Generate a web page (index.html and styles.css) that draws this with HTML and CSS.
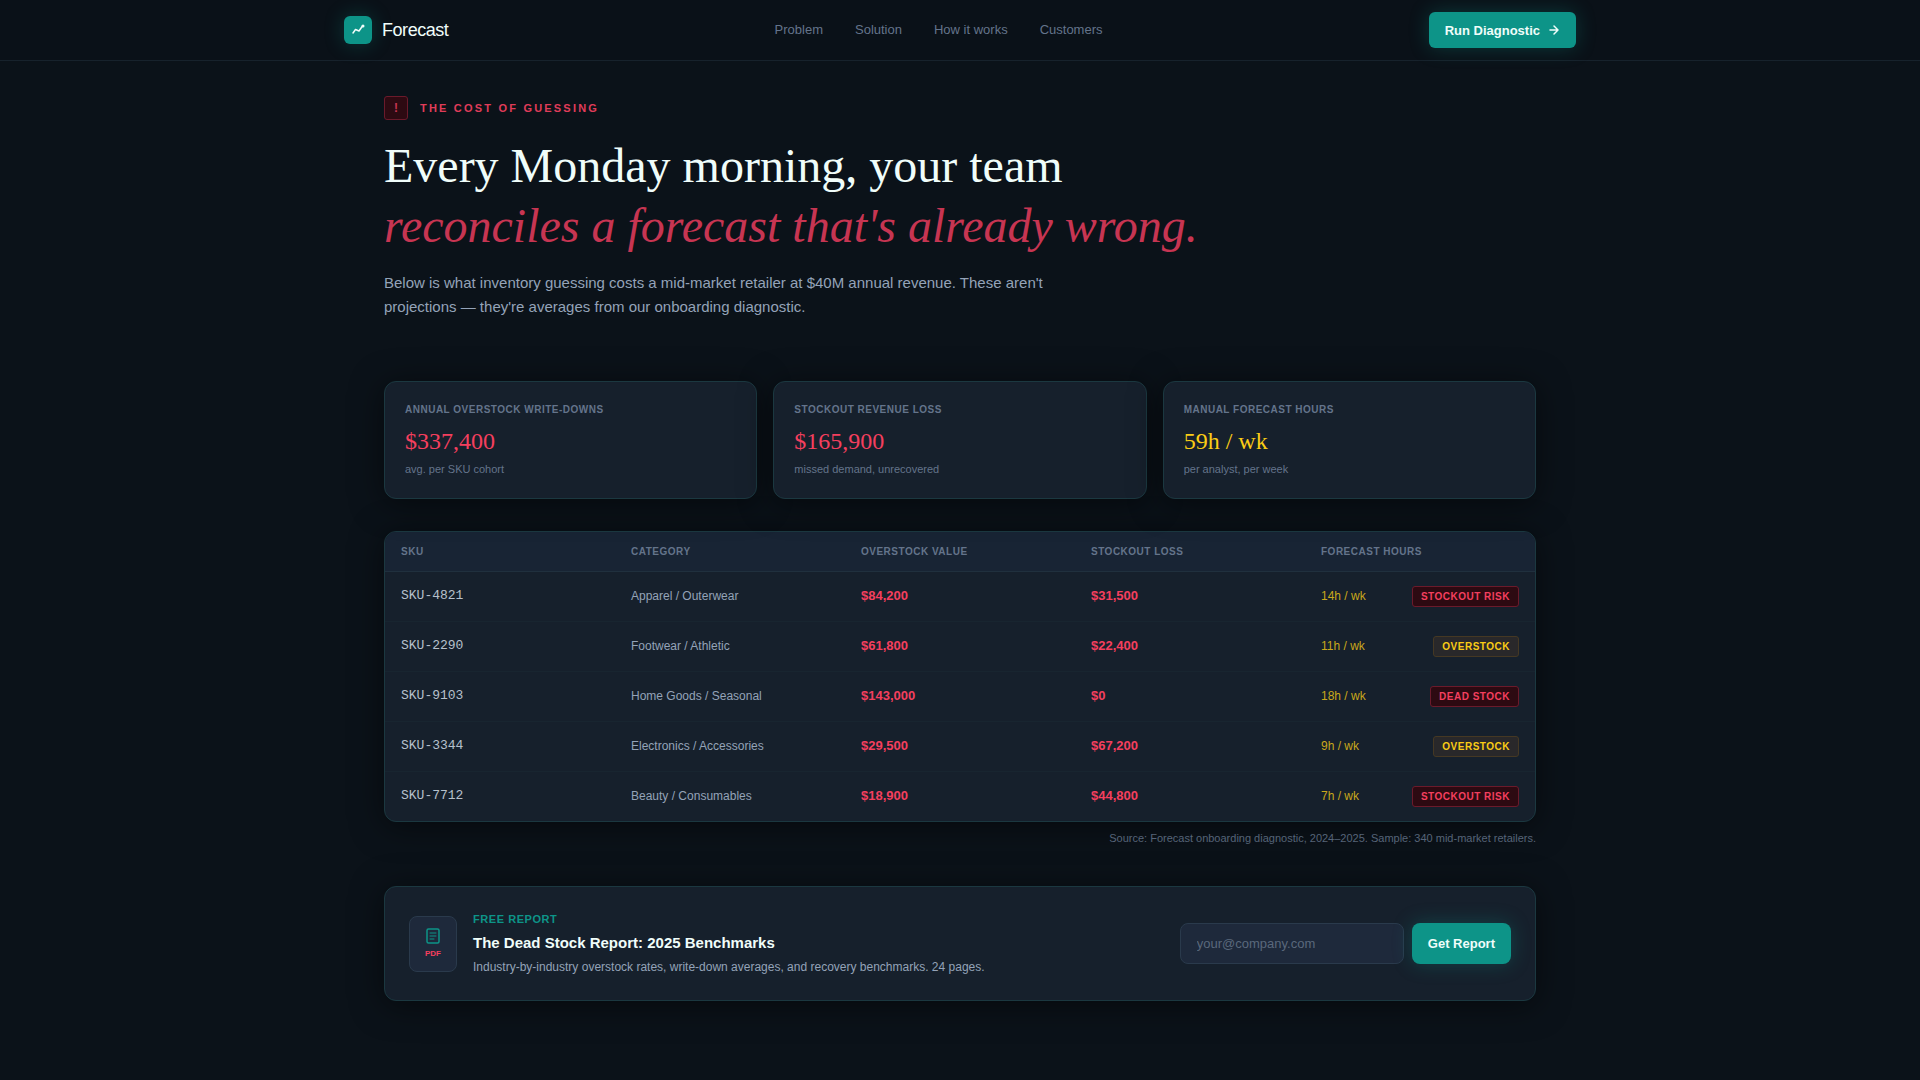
FILE: index.html
```html
<!DOCTYPE html>
<html lang="en">
<head>
  <meta charset="UTF-8">
  <meta name="viewport" content="width=device-width, initial-scale=1.0">
  <title>Forecast</title>
  <link rel="stylesheet" href="styles.css">
</head>
<body>

<!-- Top Navigation -->
<header class="site-header">
  <div class="header-inner">
    <a class="brand" href="#">
      <span class="brand-mark">
        <svg width="14" height="14" viewBox="0 0 14 14" fill="none" stroke="currentColor" stroke-width="1.5" stroke-linecap="round" stroke-linejoin="round" aria-hidden="true">
          <path d="M2 10l2.5-3.5L8 8l3.5-5"/>
          <circle cx="12" cy="3" r="1.5" fill="currentColor" stroke="none"/>
        </svg>
      </span>
      <span class="brand-name">Forecast</span>
    </a>
    <nav class="main-nav">
      <a href="#problem">Problem</a>
      <a href="#solution">Solution</a>
      <a href="#how-it-works">How it works</a>
      <a href="#customers">Customers</a>
    </nav>
    <button type="button" class="btn-primary btn-nav">
      Run Diagnostic
      <svg width="12" height="12" viewBox="0 0 12 12" fill="none" stroke="currentColor" stroke-width="1.5" stroke-linecap="round" stroke-linejoin="round" aria-hidden="true">
        <path d="M2 6h8M6 2l4 4-4 4"/>
      </svg>
    </button>
  </div>
</header>

<main class="container" id="problem">
  <!-- Intro -->
  <div class="eyebrow">
    <span class="eyebrow-icon">!</span>
    <span class="eyebrow-text">The cost of guessing</span>
  </div>
  <h1>Every Monday morning, your team <em>reconciles a forecast that's already wrong.</em></h1>
  <p class="lead">Below is what inventory guessing costs a mid-market retailer at $40M annual revenue. These aren't projections — they're averages from our onboarding diagnostic.</p>

  <!-- Summary Cards -->
  <div class="stats">
    <div class="card stat">
      <h2>Annual overstock write-downs</h2>
      <p class="stat-value loss">$337,400</p>
      <p class="stat-note">avg. per SKU cohort</p>
    </div>
    <div class="card stat">
      <h2>Stockout revenue loss</h2>
      <p class="stat-value loss">$165,900</p>
      <p class="stat-note">missed demand, unrecovered</p>
    </div>
    <div class="card stat">
      <h2>Manual forecast hours</h2>
      <p class="stat-value hours">59h / wk</p>
      <p class="stat-note">per analyst, per week</p>
    </div>
  </div>

  <!-- SKU Table -->
  <div class="card table-card">
    <table>
      <thead>
        <tr>
          <th>SKU</th>
          <th>Category</th>
          <th>Overstock value</th>
          <th>Stockout loss</th>
          <th>Forecast hours</th>
        </tr>
      </thead>
      <tbody>
        <tr>
          <td class="sku">SKU-4821</td>
          <td>Apparel / Outerwear</td>
          <td class="money">$84,200</td>
          <td class="money">$31,500</td>
          <td><div class="hours-cell">14h / wk <span class="badge badge-risk">Stockout risk</span></div></td>
        </tr>
        <tr>
          <td class="sku">SKU-2290</td>
          <td>Footwear / Athletic</td>
          <td class="money">$61,800</td>
          <td class="money">$22,400</td>
          <td><div class="hours-cell">11h / wk <span class="badge badge-over">Overstock</span></div></td>
        </tr>
        <tr>
          <td class="sku">SKU-9103</td>
          <td>Home Goods / Seasonal</td>
          <td class="money">$143,000</td>
          <td class="money">$0</td>
          <td><div class="hours-cell">18h / wk <span class="badge badge-risk">Dead stock</span></div></td>
        </tr>
        <tr>
          <td class="sku">SKU-3344</td>
          <td>Electronics / Accessories</td>
          <td class="money">$29,500</td>
          <td class="money">$67,200</td>
          <td><div class="hours-cell">9h / wk <span class="badge badge-over">Overstock</span></div></td>
        </tr>
        <tr>
          <td class="sku">SKU-7712</td>
          <td>Beauty / Consumables</td>
          <td class="money">$18,900</td>
          <td class="money">$44,800</td>
          <td><div class="hours-cell">7h / wk <span class="badge badge-risk">Stockout risk</span></div></td>
        </tr>
      </tbody>
    </table>
  </div>
  <p class="source">Source: Forecast onboarding diagnostic, 2024–2025. Sample: 340 mid-market retailers.</p>

  <!-- Report Signup -->
  <section class="card report">
    <div class="report-icon">
      <svg width="20" height="20" viewBox="0 0 20 20" fill="none" stroke="currentColor" stroke-linecap="round" aria-hidden="true">
        <rect x="4" y="3" width="12" height="14" rx="1.5" stroke-width="1.5"/>
        <path d="M7 7h6M7 10h6M7 13h4"/>
      </svg>
      <span>PDF</span>
    </div>
    <div class="report-text">
      <p class="report-tag">Free report</p>
      <h2>The Dead Stock Report: 2025 Benchmarks</h2>
      <p class="report-desc">Industry-by-industry overstock rates, write-down averages, and recovery benchmarks. 24 pages.</p>
    </div>
    <form class="report-form">
      <input type="email" aria-label="Work email" placeholder="your@company.com">
      <button type="button" class="btn-primary btn-report">Get Report</button>
    </form>
  </section>
</main>

</body>
</html>
```
FILE: styles.css
```css
/* Global Styles */
* {
  box-sizing: border-box;
}

body {
  margin: 0;
  background-color: #0b1219;
  color: #f0fdfa;
  font-family: "Liberation Sans", Arial, sans-serif;
  font-size: 12px;
}

h1, h2, p {
  margin: 0;
}

a {
  color: inherit;
  text-decoration: none;
}

/* Header */
.site-header {
  background-color: #0a1118;
  border-bottom: 1px solid #17222c;
}

.header-inner {
  display: flex;
  justify-content: space-between;
  align-items: center;
  max-width: 1280px;
  height: 60px;
  margin: 0 auto;
  padding: 0 24px;
}

.brand {
  display: flex;
  align-items: center;
  gap: 10px;
}

.brand-mark {
  display: flex;
  align-items: center;
  justify-content: center;
  width: 28px;
  height: 28px;
  border-radius: 6px;
  background-color: #0d9488;
  box-shadow: 0 0 20px rgba(13, 148, 136, 0.3);
}

.brand-name {
  font-size: 18px;
  letter-spacing: -0.025em;
}

.main-nav {
  display: flex;
  gap: 32px;
  color: #64748b;
  font-size: 13px;
  line-height: 20px;
}

.btn-primary {
  display: flex;
  align-items: center;
  gap: 8px;
  padding: 0 16px;
  border: none;
  background-color: #0d9488;
  box-shadow: 0 0 20px rgba(13, 148, 136, 0.3);
  color: #f0fdfa;
  font-family: inherit;
  font-size: 13px;
  font-weight: bold;
  cursor: pointer;
}

.btn-nav {
  height: 36px;
  border-radius: 6px;
}

/* Intro */
.container {
  max-width: 1200px;
  margin: 0 auto;
  padding: 35px 24px 80px;
}

.eyebrow {
  display: flex;
  align-items: center;
  gap: 12px;
  color: #f43f5e;
  font-weight: bold;
}

.eyebrow-icon {
  display: flex;
  align-items: center;
  justify-content: center;
  width: 24px;
  height: 24px;
  border: 1px solid #6b1a2b;
  border-radius: 3px;
  background-color: #2d0a12;
  color: #c73552;
}

.eyebrow-text {
  color: #e03c59;
  font-size: 11px;
  letter-spacing: 0.2em;
  text-transform: uppercase;
}

h1 {
  margin-top: 16px;
  font-family: "Liberation Serif", "Times New Roman", serif;
  font-size: 48px;
  font-weight: normal;
  line-height: 60px;
}

h1 em {
  display: block;
  color: #c73552;
}

.lead {
  max-width: 672px;
  margin-top: 15px;
  color: #94a3b8;
  font-size: 15px;
  line-height: 24px;
}

/* Cards */
.card {
  border: 1px solid #1b3840;
  border-radius: 12px;
  background-color: #16202c;
  box-shadow: 0 4px 32px rgba(0, 0, 0, 0.5);
}

.stats {
  display: grid;
  grid-template-columns: repeat(3, 1fr);
  gap: 16px;
  margin-top: 62px;
}

.stat {
  padding: 20px;
}

.stat h2 {
  color: #64748b;
  font-size: 10px;
  line-height: 16px;
  letter-spacing: 0.05em;
  text-transform: uppercase;
}

.stat-value {
  margin: 7px 0 4px;
  font-family: "Liberation Serif", "Times New Roman", serif;
  font-size: 24px;
  line-height: 32px;
}

.stat-note {
  margin-bottom: 1px;
  color: #64748b;
  font-size: 11px;
  line-height: 16px;
}

.loss {
  color: #f43f5e;
}

.hours {
  color: #facc15;
}

/* Table */
.table-card {
  margin-top: 32px;
  overflow: hidden;
}

table {
  width: 100%;
  table-layout: fixed;
  border-collapse: collapse;
}

th {
  height: 39px;
  padding: 0 16px;
  border-bottom: 1px solid #20303e;
  background-color: #182434;
  color: #64748b;
  font-size: 10px;
  letter-spacing: 0.05em;
  text-align: left;
  text-transform: uppercase;
}

td {
  height: 50px;
  padding: 0 16px;
  border-bottom: 1px solid #182530;
  color: #94a3b8;
  line-height: 20px;
}

tr:last-child td {
  border-bottom: none;
}

.sku {
  color: #b6c0cc;
  font-family: "Liberation Mono", "Courier New", monospace;
  font-size: 13px;
}

.money {
  color: #f43f5e;
  font-size: 13px;
  font-weight: bold;
}

.hours-cell {
  display: flex;
  justify-content: space-between;
  align-items: center;
  color: #c9a81b;
}

.badge {
  padding: 0 8px;
  border: 1px solid;
  border-radius: 3px;
  font-size: 10px;
  font-weight: bold;
  line-height: 19px;
  letter-spacing: 0.05em;
  text-transform: uppercase;
}

.badge-risk {
  border-color: #6b1a2b;
  background-color: #2d0a12;
  color: #f43f5e;
}

.badge-over {
  border-color: #453823;
  background-color: #29282a;
  color: #facc15;
}

.source {
  margin-top: 8px;
  color: #566478;
  font-size: 11px;
  line-height: 16px;
  text-align: right;
}

/* Report Signup */
.report {
  display: flex;
  align-items: center;
  gap: 16px;
  margin-top: 40px;
  padding: 24px;
}

.report-icon {
  display: flex;
  flex-direction: column;
  align-items: center;
  justify-content: center;
  width: 48px;
  height: 56px;
  border: 1px solid #2a3a4c;
  border-radius: 8px;
  background-color: #1e293b;
  color: #0d9488;
}

.report-icon span {
  color: #f43f5e;
  font-size: 8px;
  font-weight: bold;
  line-height: 16px;
}

.report-text {
  flex: 1;
}

.report-tag {
  color: #0d9488;
  font-size: 11px;
  font-weight: bold;
  line-height: 16px;
  letter-spacing: 0.05em;
  text-transform: uppercase;
}

.report-text h2 {
  margin: 4px 0;
  font-size: 15px;
  line-height: 24px;
}

.report-desc {
  color: #94a3b8;
  line-height: 17px;
}

.report-form {
  display: flex;
  gap: 8px;
}

.report-form input {
  width: 224px;
  height: 41px;
  padding: 0 16px;
  border: 1px solid #2a3a4c;
  border-radius: 8px;
  background-color: #1e293b;
  color: #f0fdfa;
  font-family: inherit;
  font-size: 13px;
}

.report-form input::placeholder {
  color: #5a687c;
}

.btn-report {
  border-radius: 8px;
}
```
